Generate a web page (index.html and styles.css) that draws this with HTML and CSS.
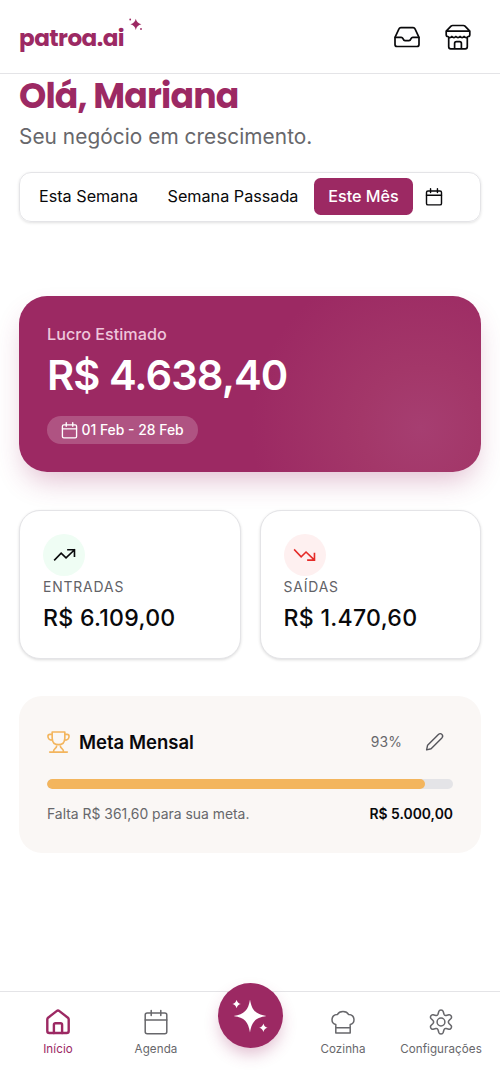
FILE: index.html
```html
<!DOCTYPE html>
<html lang="pt-BR">
<head>
<meta charset="utf-8">
<meta name="viewport" content="width=device-width, initial-scale=1">
<title>patroa.ai</title>
<link rel="stylesheet" href="styles.css">
</head>
<body>
<div class="app">
  <header class="header">
    <div class="brand">
      <span class="brand-name">patroa.ai</span>
      <svg class="brand-spark" viewBox="0 0 14 14"><path d="M6.8.8Q7.7 5.2 12.4 6.3Q7.7 7.4 6.8 12Q5.9 7.4 1.4 6.3Q5.9 5.2 6.8.8Z"/><circle cx="1.2" cy="1.5" r=".9"/><circle cx="12" cy="11" r=".9"/></svg>
    </div>
    <div class="header-actions">
      <svg class="icon inbox" viewBox="0 0 26 24"><path d="M6.8 2.6h12.4c.8 0 1.4.4 1.7 1.1l4.1 8.6v7.2c0 1.1-.9 2-2 2H3c-1.1 0-2-.9-2-2v-7.2l4.1-8.6c.3-.7.9-1.1 1.7-1.1Z"/><path d="M1.3 12.3h6c.8 0 1.2.4 1.5 1.1.6 1.5 1 2.3 2.2 2.3h4c1.2 0 1.6-.8 2.2-2.3.3-.7.7-1.1 1.5-1.1h6"/></svg>
      <svg class="icon store" viewBox="0 0 26 26"><path d="M1.2 7.2 6 2.2c.5-.5.9-.7 1.6-.7h10.8c.7 0 1.1.2 1.6.7l4.8 5M1.2 7.2h23.6v3.6c0 1.1-.6 1.7-1.7 1.7-1.2 1.4-2.8 1.4-4 0-1.2 1.4-2.8 1.4-4 0-1.3 1.4-2.9 1.4-4.2 0-1.2 1.4-2.8 1.4-4 0-1.2 1.4-2.8 1.4-4 0-1.1 0-1.7-.6-1.7-1.7ZM3.7 13.2v9.6c0 1.2.8 2 2 2h14.6c1.2 0 2-.8 2-2v-9.6M9.6 24.8v-5.3c0-1.1.8-1.8 1.8-1.8h3.2c1 0 1.8.7 1.8 1.8v5.3"/></svg>
    </div>
  </header>

  <main class="main">
    <h1 class="greeting">Olá, Mariana</h1>
    <p class="subtitle">Seu negócio em crescimento.</p>

    <div class="periods">
      <button class="period week">Esta Semana</button>
      <button class="period last">Semana Passada</button>
      <button class="period active">Este Mês</button>
      <button class="period pick"><svg class="icon cal" viewBox="0 0 24 24"><rect x="2" y="4" width="20" height="18.5" rx="2"/><path d="M2 9.7h20M7.4 1v5M16.6 1v5"/></svg></button>
    </div>

    <section class="profit">
      <p class="profit-label">Lucro Estimado</p>
      <p class="profit-value">R$ 4.638,40</p>
      <div class="range"><svg class="icon cal range-icon" viewBox="0 0 24 24"><rect x="2" y="4" width="20" height="18.5" rx="2"/><path d="M2 9.7h20M7.4 1v5M16.6 1v5"/></svg><span>01 Feb - 28 Feb</span></div>
    </section>

    <section class="stats">
      <article class="stat">
        <div class="badge in"><svg class="icon trend" viewBox="0 0 24 14"><path d="M1.8 12 8.5 5.1 13.6 10 22.2 1.8M15.6 1.5h6.8v6.7"/></svg></div>
        <p class="stat-label">ENTRADAS</p>
        <p class="stat-value">R$ 6.109,00</p>
      </article>
      <article class="stat">
        <div class="badge out"><svg class="icon trend" viewBox="0 0 24 14"><path d="M1.8 1.8 8.5 8.8 13.6 3.9 22.2 12M15.6 12.3h6.8V5.6"/></svg></div>
        <p class="stat-label">SAÍDAS</p>
        <p class="stat-value">R$ 1.470,60</p>
      </article>
    </section>

    <section class="goal">
      <div class="goal-head">
        <svg class="icon trophy" viewBox="0 0 24 24"><path d="M5.4 1.6h13.2v6.2c0 4.5-2.6 7-6.6 7s-6.6-2.5-6.6-7ZM5.4 4H3C1.7 4 1 4.7 1 6c0 2.6 1.5 4.2 5 4.2M18.6 4H21c1.3 0 2 .7 2 2 0 2.6-1.5 4.2-5 4.2M10 14.8v1.6c0 2.6-3.3 2.1-3.3 6M14 14.8v1.6c0 2.6 3.3 2.1 3.3 6M2.8 22.5h18.4"/></svg>
        <h2 class="goal-title">Meta Mensal</h2>
        <span class="goal-percent">93%</span>
        <svg class="icon pencil" viewBox="0 0 20 20"><path d="M2.6 13.2 13.4 2.4c1.2-1.1 2.5-1.1 3.5 0s1 2.4 0 3.5L6.1 16.7 1.6 17.9Z"/></svg>
      </div>
      <div class="bar"><div class="bar-fill" style="width:93%"></div></div>
      <div class="goal-foot"><span class="missing">Falta R$ 361,60 para sua meta.</span><span class="target">R$ 5.000,00</span></div>
    </section>
  </main>

  <nav class="nav">
    <a class="nav-item current"><svg class="icon nav-icon" viewBox="0 0 26 26"><path d="M2.3 10.4c0-.7.3-1.2.8-1.7l8.5-6.6c.9-.7 1.9-.7 2.8 0l8.5 6.6c.5.5.8 1 .8 1.7V22c0 1.2-.8 2-2 2H4.3c-1.2 0-2-.8-2-2Z"/><path d="M8.9 24v-8.2c0-.9.6-1.5 1.5-1.5h5.2c.9 0 1.5.6 1.5 1.5V24"/></svg><span>Início</span></a>
    <a class="nav-item"><svg class="icon nav-icon" viewBox="0 0 26 26"><rect x="2.2" y="4" width="21.6" height="20.8" rx="2"/><path d="M2.2 11h21.6M8.2 1.4v5M17.8 1.4v5"/></svg><span>Agenda</span></a>
    <div class="nav-center"><a class="assistant"><svg class="assistant-icon" viewBox="0 0 40 40"><path d="M20 3.5C21.8 14.4 25.4 18.1 36.4 20C25.4 21.8 21.8 25.5 20 36.4C18.2 25.5 14.6 21.8 3.6 20C14.6 18.1 18.2 14.4 20 3.5Z"/><path d="M6.6 3.8Q7.3 7.2 10.8 8Q7.3 8.8 6.6 12.2Q5.8 8.8 2.4 8Q5.8 7.2 6.6 3.8ZM33.4 27.6Q34.1 31.1 37.6 31.8Q34.1 32.6 33.4 36Q32.6 32.6 29.2 31.8Q32.6 31.1 33.4 27.6Z"/></svg></a></div>
    <a class="nav-item"><svg class="icon nav-icon" viewBox="0 0 26 26"><path d="M5.8 24V15.4C3.4 14.9 2 13.2 2 10.7c0-3.2 2.2-5.2 5.3-5.1C8.5 3.5 10.3 2.6 13 2.6s4.5.9 5.7 3C21.8 5.5 24 7.5 24 10.7c0 2.5-1.4 4.2-3.8 4.7V24ZM5.8 18.8h14.4"/></svg><span>Cozinha</span></a>
    <a class="nav-item"><svg class="icon nav-icon" viewBox="0 0 26 26"><path d="m10.8 2.5-.8 2.8c-.3.9-1.2 1.4-2.1 1.2l-2.8-.7C3.2 5.4 1.7 8 3 9.5l2 2.1c.7.8.7 2 0 2.8L3 16.5C1.7 18 3.2 20.6 5.1 20.2l2.8-.7c.9-.2 1.8.3 2.1 1.2l.8 2.8c.6 1.9 3.8 1.9 4.4 0l.8-2.8c.3-.9 1.2-1.4 2.1-1.2l2.8.7c1.9.4 3.4-2.2 2.1-3.7l-2-2.1c-.7-.8-.7-2 0-2.8l2-2.1c1.3-1.5-.2-4.1-2.1-3.7l-2.8.7c-.9.2-1.8-.3-2.1-1.2l-.8-2.8c-.6-1.9-3.8-1.9-4.4 0Z"/><circle cx="13" cy="13" r="3.9"/></svg><span>Configurações</span></a>
  </nav>
</div>
</body>
</html>
```
FILE: styles.css
```css
* { box-sizing: border-box; }
body { margin: 0; background: #fff; color: #09090b; font-family: Inter, "Liberation Sans", sans-serif; }
p, h1, h2 { margin: 0; }
button { border: 0; background: none; padding: 0; font: inherit; color: inherit; }
.app { width: 500px; height: 1084px; display: flex; flex-direction: column; overflow: hidden; }
.icon { display: block; fill: none; stroke: currentColor; stroke-width: 1.7; stroke-linecap: round; stroke-linejoin: round; flex: none; }

.header { height: 74px; flex: none; display: flex; justify-content: space-between; align-items: center; padding: 1px 29px 0 19px; border-bottom: 1px solid #e4e4e7; }
.brand { display: flex; align-items: flex-start; gap: 5px; color: #9c2963; }
.brand-name { padding-top: 1px; font-family: Poppins, Inter, sans-serif; font-weight: 700; font-size: 23.1px; line-height: 36px; letter-spacing: -.55px; width: 105px; white-space: nowrap; }
.brand-spark { width: 14px; height: 14px; fill: currentColor; margin-top: -1px; }
.header-actions { display: flex; align-items: center; gap: 25px; }
.inbox { width: 26px; height: 24px; }
.store { width: 26px; height: 26px; }

.main { flex: 1; padding: 0 19px; }
.greeting { padding-top: 1px; font-family: Poppins, Inter, sans-serif; font-weight: 700; font-size: 34.7px; line-height: 42px; letter-spacing: -.82px; color: #9c2963; white-space: nowrap; }
.subtitle { margin-top: 5px; font-size: 20.8px; line-height: 30px; letter-spacing: .06px; color: #67676b; white-space: nowrap; }

.periods { margin-top: 20px; height: 50px; display: flex; align-items: center; padding: 0 5px 1px; border: 1px solid #e4e4e7; border-radius: 12px; box-shadow: 0 1px 3px rgba(0,0,0,.12); font-size: 16.2px; letter-spacing: .18px; }
.period { height: 37px; display: flex; align-items: center; justify-content: center; white-space: nowrap; flex: none; padding-bottom: 1px; }
.week { width: 127px; }
.last { width: 162px; }
.active { width: 99px; background: #9c2963; color: #fff; border-radius: 6.5px; font-weight: 500; }
.pick { width: 42px; padding-bottom: 0; }
.cal { width: 18px; height: 18px; stroke-width: 1.9; }

.profit { margin-top: 74px; height: 176px; padding: 27px 28px; border-radius: 28px; color: #fff; background: radial-gradient(circle at 402px 132px, #a63e71 0, #a33769 60px, #9c2963 170px); box-shadow: 0 14px 28px -6px rgba(156,41,99,.3); }
.profit-label { font-size: 16.2px; line-height: 23px; font-weight: 500; color: #eec6db; }
.profit-value { font-size: 41.7px; line-height: 50px; font-weight: 600; letter-spacing: -.95px; margin-top: 4px; white-space: nowrap; }
.range { margin-top: 16px; width: 151px; height: 28px; border-radius: 14px; background: rgba(255,255,255,.2); display: flex; align-items: center; padding-left: 13.5px; gap: 4px; font-size: 13.9px; font-weight: 500; white-space: nowrap; }
.range-icon { width: 17px; height: 17px; }

.stats { margin-top: 38px; display: grid; grid-template-columns: 1fr 1fr; gap: 19px; }
.stat { height: 149px; padding: 23px; border: 1px solid #e4e4e7; border-radius: 21px; box-shadow: 0 1px 3px rgba(0,0,0,.14); background: #fff; }
.badge { width: 42px; height: 42px; border-radius: 50%; display: grid; place-items: center; }
.in { background: #effdf4; }
.out { background: #fef0f0; color: #e52b28; }
.trend { width: 23px; height: 14px; stroke-linecap: square; stroke-linejoin: miter; }
.stat-label { margin-top: 1px; font-size: 13.9px; line-height: 20px; letter-spacing: .85px; color: #626267; }
.stat-value { margin-top: 5px; font-size: 23.1px; line-height: 32px; font-weight: 500; letter-spacing: .28px; white-space: nowrap; }

.goal { margin-top: 37px; height: 157px; padding: 28px 28px 0; border-radius: 23px; background: #faf7f5; }
.goal-head { height: 36px; display: flex; align-items: center; padding-right: 8px; }
.trophy { width: 23px; height: 24px; color: #f3b55d; }
.goal-title { margin-left: 9px; flex: 1; font-size: 18.5px; font-weight: 600; }
.goal-percent { color: #67676b; font-size: 13.9px; letter-spacing: .15px; }
.pencil { width: 20px; height: 20px; margin-left: 23px; color: #55555b; stroke-width: 1.4; }
.bar { margin-top: 19px; height: 10px; border-radius: 5px; overflow: hidden; background: #e4e4e7; }
.bar-fill { height: 100%; border-radius: 5px; background: #f3b55d; }
.goal-foot { margin-top: 15px; line-height: 20px; display: flex; justify-content: space-between; font-size: 13.9px; white-space: nowrap; }
.missing { color: #67676b; }
.target { font-weight: 600; }

.nav { height: 93px; flex: none; border-top: 1px solid #e4e4e7; display: grid; grid-template-columns: 116px 80px 108px 78px 118px; color: #67676b; font-size: 11.6px; }
.nav-item { display: flex; flex-direction: column; align-items: center; gap: 6px; padding-top: 17px; line-height: 16px; letter-spacing: .08px; white-space: nowrap; }
.nav-icon { width: 26px; height: 26px; stroke-width: 1.5; }
.current { color: #9c2963; }
.current .nav-icon { stroke-width: 2.4; }
.nav-center { display: flex; justify-content: center; align-items: flex-start; }
.assistant { width: 65px; height: 65px; margin-top: -9px; border-radius: 50%; background: #9c2963; display: grid; place-items: center; box-shadow: 0 8px 16px -2px rgba(156,41,99,.3); }
.assistant-icon { width: 40px; height: 40px; fill: #fff; }
```
